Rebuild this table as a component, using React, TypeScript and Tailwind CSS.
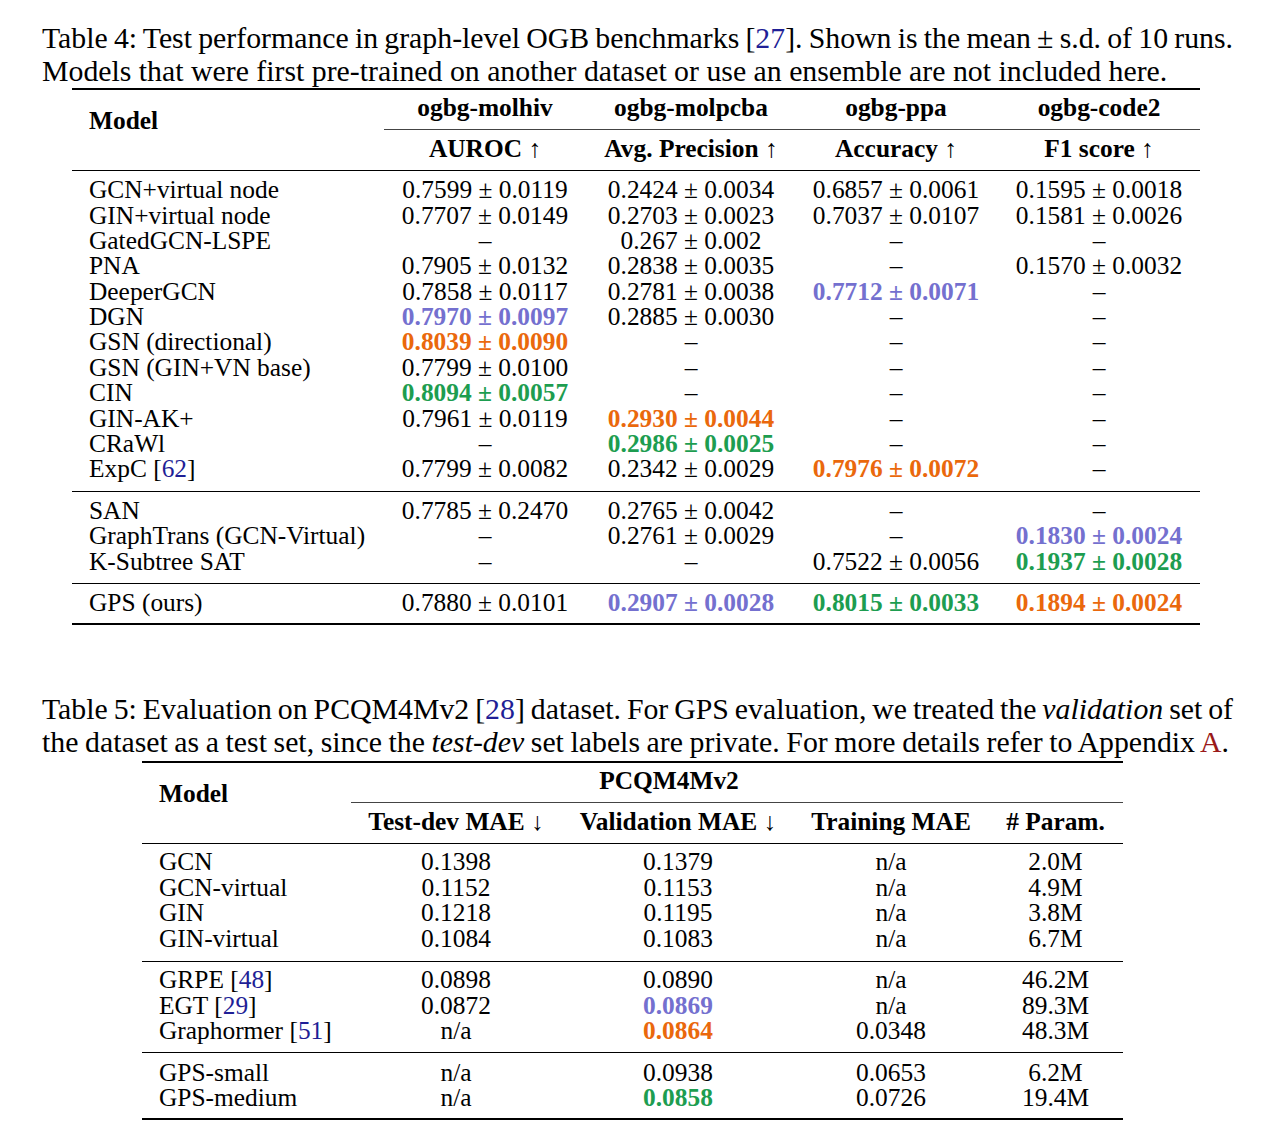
import React from "react";

type Cell = { t: string; c?: "p" | "o" | "g" };

const P = (t: string): Cell => ({ t, c: "p" });
const O = (t: string): Cell => ({ t, c: "o" });
const G = (t: string): Cell => ({ t, c: "g" });
const N = (t: string): Cell => ({ t });
const D: Cell = { t: "–" };

function Val({ cell }: { cell: Cell }) {
  if (cell.c === "p") return <span className="font-bold text-[#7470cf]">{cell.t}</span>;
  if (cell.c === "o") return <span className="font-bold text-[#ea680c]">{cell.t}</span>;
  if (cell.c === "g") return <span className="font-bold text-[#1d9d50]">{cell.t}</span>;
  return <span>{cell.t}</span>;
}

function Cite({ n }: { n: string }) {
  return (
    <span>
      [<span className="text-[#1f1f96]">{n}</span>]
    </span>
  );
}

type Row = { m: React.ReactNode; v: Cell[] };

const t4g1: Row[] = [
  { m: "GCN+virtual node", v: [N("0.7599 ± 0.0119"), N("0.2424 ± 0.0034"), N("0.6857 ± 0.0061"), N("0.1595 ± 0.0018")] },
  { m: "GIN+virtual node", v: [N("0.7707 ± 0.0149"), N("0.2703 ± 0.0023"), N("0.7037 ± 0.0107"), N("0.1581 ± 0.0026")] },
  { m: "GatedGCN-LSPE", v: [D, N("0.267 ± 0.002"), D, D] },
  { m: "PNA", v: [N("0.7905 ± 0.0132"), N("0.2838 ± 0.0035"), D, N("0.1570 ± 0.0032")] },
  { m: "DeeperGCN", v: [N("0.7858 ± 0.0117"), N("0.2781 ± 0.0038"), P("0.7712 ± 0.0071"), D] },
  { m: "DGN", v: [P("0.7970 ± 0.0097"), N("0.2885 ± 0.0030"), D, D] },
  { m: "GSN (directional)", v: [O("0.8039 ± 0.0090"), D, D, D] },
  { m: "GSN (GIN+VN base)", v: [N("0.7799 ± 0.0100"), D, D, D] },
  { m: "CIN", v: [G("0.8094 ± 0.0057"), D, D, D] },
  { m: "GIN-AK+", v: [N("0.7961 ± 0.0119"), O("0.2930 ± 0.0044"), D, D] },
  { m: "CRaWl", v: [D, G("0.2986 ± 0.0025"), D, D] },
  { m: <>ExpC <Cite n="62" /></>, v: [N("0.7799 ± 0.0082"), N("0.2342 ± 0.0029"), O("0.7976 ± 0.0072"), D] },
];

const t4g2: Row[] = [
  { m: "SAN", v: [N("0.7785 ± 0.2470"), N("0.2765 ± 0.0042"), D, D] },
  { m: "GraphTrans (GCN-Virtual)", v: [D, N("0.2761 ± 0.0029"), D, P("0.1830 ± 0.0024")] },
  { m: "K-Subtree SAT", v: [D, D, N("0.7522 ± 0.0056"), G("0.1937 ± 0.0028")] },
];

const t4g3: Row[] = [
  { m: "GPS (ours)", v: [N("0.7880 ± 0.0101"), P("0.2907 ± 0.0028"), G("0.8015 ± 0.0033"), O("0.1894 ± 0.0024")] },
];

const t5g1: Row[] = [
  { m: "GCN", v: [N("0.1398"), N("0.1379"), N("n/a"), N("2.0M")] },
  { m: "GCN-virtual", v: [N("0.1152"), N("0.1153"), N("n/a"), N("4.9M")] },
  { m: "GIN", v: [N("0.1218"), N("0.1195"), N("n/a"), N("3.8M")] },
  { m: "GIN-virtual", v: [N("0.1084"), N("0.1083"), N("n/a"), N("6.7M")] },
];
const t5g2: Row[] = [
  { m: <>GRPE <Cite n="48" /></>, v: [N("0.0898"), N("0.0890"), N("n/a"), N("46.2M")] },
  { m: <>EGT <Cite n="29" /></>, v: [N("0.0872"), P("0.0869"), N("n/a"), N("89.3M")] },
  { m: <>Graphormer <Cite n="51" /></>, v: [N("n/a"), O("0.0864"), N("0.0348"), N("48.3M")] },
];
const t5g3: Row[] = [
  { m: "GPS-small", v: [N("n/a"), N("0.0938"), N("0.0653"), N("6.2M")] },
  { m: "GPS-medium", v: [N("n/a"), G("0.0858"), N("0.0726"), N("19.4M")] },
];

function Rows4({ rows }: { rows: Row[] }) {
  return (
    <>
      {rows.map((r, i) => (
        <div key={i} className="grid grid-cols-[310px_206px_206px_204px_202px] h-[25.36px] leading-[25.36px] whitespace-nowrap">
          <div className="pl-[17px]">{r.m}</div>
          {r.v.map((c, j) => (
            <div key={j} className="text-center">
              <Val cell={c} />
            </div>
          ))}
        </div>
      ))}
    </>
  );
}

function Rows5({ rows }: { rows: Row[] }) {
  return (
    <>
      {rows.map((r, i) => (
        <div key={i} className="grid grid-cols-[208px_212px_232px_194px_135px] h-[25.36px] leading-[25.36px] whitespace-nowrap">
          <div className="pl-[17px]">{r.m}</div>
          {r.v.map((c, j) => (
            <div key={j} className="text-center">
              <Val cell={c} />
            </div>
          ))}
        </div>
      ))}
    </>
  );
}

const Arrow = ({ ch }: { ch: string }) => <span className="font-normal">{ch}</span>;

export default function App() {
  return (
    <div className="bg-white min-h-[1138px] w-[1269px] text-black font-['Liberation_Serif',serif] pt-[21px] pl-[42px]">
      {/* Caption 4 */}
      <div className="w-[1191px] text-[29.8px] leading-[33px]">
        <div className="text-justify [text-align-last:justify] [word-spacing:-3px]">
          Table 4: Test performance in graph-level OGB benchmarks <Cite n="27" />. Shown is the mean ± s.d. of 10 runs.
        </div>
        <div className="whitespace-nowrap">Models that were first pre-trained on another dataset or use an ensemble are not included here.</div>
      </div>

      {/* Table 4 */}
      <div className="mt-[1px] ml-[30px] w-[1128px] text-[25.4px]">
        <div className="h-[2px] bg-black" />
        <div className="flex">
          <div className="w-[310px] pl-[17px] pt-[18px] font-bold leading-[25.36px]">Model</div>
          <div className="flex-1 flex flex-col">
            <div className="grid grid-cols-[206px_206px_204px_202px] h-[39px] pt-[5px] leading-[25.36px] font-bold text-center whitespace-nowrap">
              <div>ogbg-molhiv</div>
              <div>ogbg-molpcba</div>
              <div>ogbg-ppa</div>
              <div>ogbg-code2</div>
            </div>
            <div className="h-px bg-[#444] ml-[2px]" />
            <div className="grid grid-cols-[206px_206px_204px_202px] h-[40px] pt-[6px] leading-[25.36px] font-bold text-center whitespace-nowrap">
              <div>AUROC <Arrow ch="↑" /></div>
              <div>Avg. Precision <Arrow ch="↑" /></div>
              <div>Accuracy <Arrow ch="↑" /></div>
              <div>F1 score <Arrow ch="↑" /></div>
            </div>
          </div>
        </div>
        <div className="h-[1.3px] bg-black" />
        <div className="pt-[6px] pb-[9.5px]">
          <Rows4 rows={t4g1} />
        </div>
        <div className="h-[1.3px] bg-black" />
        <div className="pt-[5.5px] pb-[9px]">
          <Rows4 rows={t4g2} />
        </div>
        <div className="h-[1.3px] bg-black" />
        <div className="pt-[5.5px] pb-[8px]">
          <Rows4 rows={t4g3} />
        </div>
        <div className="h-[2px] bg-black" />
      </div>

      {/* Caption 5 */}
      <div className="mt-[67px] w-[1191px] text-[29.8px] leading-[33px]">
        <div className="text-justify [text-align-last:justify] [word-spacing:-3px]">
          Table 5: Evaluation on PCQM4Mv2 <Cite n="28" /> dataset. For GPS evaluation, we treated the <i>validation</i> set of
        </div>
        <div className="whitespace-nowrap [word-spacing:-0.85px]">
          the dataset as a test set, since the <i>test-dev</i> set labels are private. For more details refer to Appendix{" "}
          <span className="text-[#9a1a1a]">A</span>.
        </div>
      </div>

      {/* Table 5 */}
      <div className="mt-[3px] ml-[100px] w-[981px] text-[25.4px]">
        <div className="h-[2px] bg-black" />
        <div className="flex">
          <div className="w-[208px] pl-[17px] pt-[18px] font-bold leading-[25.36px]">Model</div>
          <div className="flex-1 flex flex-col">
            <div className="h-[39px] pt-[5px] leading-[25.36px] font-bold whitespace-nowrap">
              <div className="w-[638px] text-center">PCQM4Mv2</div>
            </div>
            <div className="h-px bg-[#444] ml-[1px]" />
            <div className="grid grid-cols-[212px_232px_194px_135px] h-[40px] pt-[6px] leading-[25.36px] font-bold text-center whitespace-nowrap">
              <div>Test-dev MAE <Arrow ch="↓" /></div>
              <div>Validation MAE <Arrow ch="↓" /></div>
              <div>Training MAE</div>
              <div># Param.</div>
            </div>
          </div>
        </div>
        <div className="h-[1.3px] bg-black" />
        <div className="pt-[5px] pb-[10px]">
          <Rows5 rows={t5g1} />
        </div>
        <div className="h-[1.3px] bg-black" />
        <div className="pt-[5.3px] pb-[8.6px]">
          <Rows5 rows={t5g2} />
        </div>
        <div className="h-[1.3px] bg-black" />
        <div className="pt-[6.3px] pb-[8px]">
          <Rows5 rows={t5g3} />
        </div>
        <div className="h-[2px] bg-black" />
      </div>
    </div>
  );
}
